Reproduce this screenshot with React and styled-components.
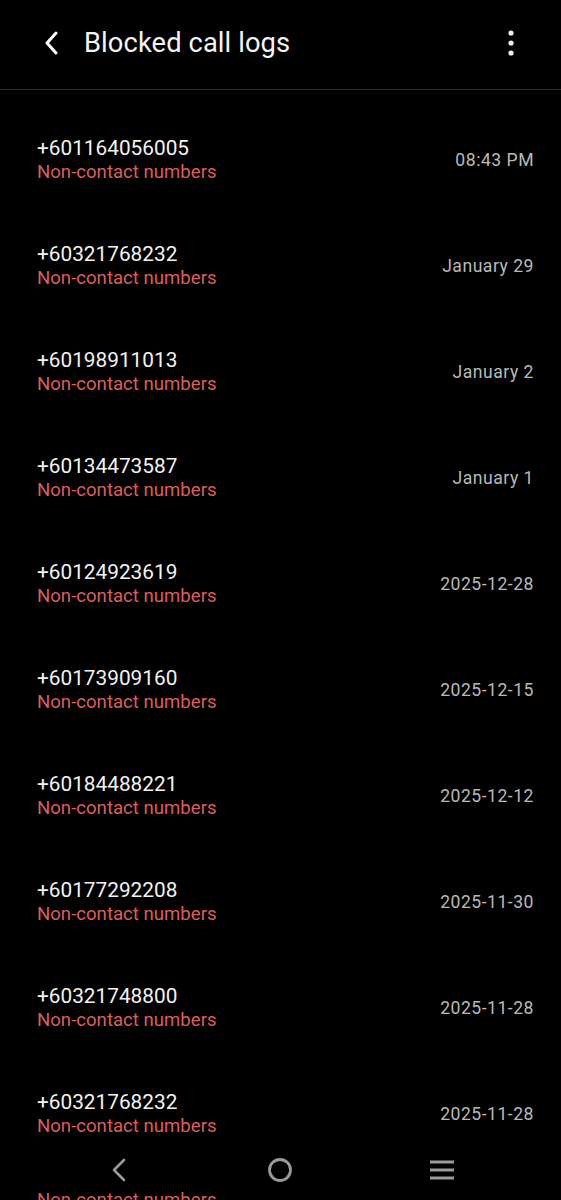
import React from 'react';
import styled, { createGlobalStyle } from 'styled-components';

const GlobalStyle = createGlobalStyle`
  html, body {
    margin: 0;
    padding: 0;
    background: #000;
  }
  body {
    font-family: Roboto, "Noto Sans", "Liberation Sans", sans-serif;
    color: #f2f2f2;
    overflow: hidden;
  }
`;

const Screen = styled.div`
  position: relative;
  width: 561px;
  height: 1200px;
  overflow: hidden;
  background: #000;
`;

const Header = styled.header`
  display: flex;
  align-items: center;
  height: 90px;
  padding: 0 40px 4px 38px;
  box-sizing: border-box;
  border-bottom: 1px solid #2b2b2b;
`;

const IconButton = styled.button`
  display: flex;
  align-items: center;
  justify-content: center;
  width: ${p => p.$size || 26}px;
  height: 40px;
  padding: 0;
  border: none;
  background: none;
  cursor: pointer;
`;

const Title = styled.h1`
  flex: 1;
  margin: 0 0 0 20px;
  font-size: 27.3px;
  font-weight: 400;
  letter-spacing: 0.1px;
  color: #f4f4f4;
`;

const List = styled.ul`
  list-style: none;
  margin: 0;
  padding: 16px 0 0;
`;

const Row = styled.li`
  display: flex;
  align-items: center;
  justify-content: space-between;
  height: 106px;
  padding: 0 27px 0 37px;
  box-sizing: border-box;
`;

const Info = styled.div`
  display: flex;
  flex-direction: column;
`;

const Number = styled.span`
  font-size: 20.8px;
  line-height: 26px;
  color: #f3f3f3;
`;

const Label = styled.span`
  font-size: 18.6px;
  line-height: 22px;
  color: #dc5d5f;
`;

const When = styled.span`
  font-size: 17.6px;
  letter-spacing: 0.5px;
  color: #b9b9b9;
  padding-top: 1px;
`;

const Peek = styled.div`
  padding: 23px 37px 0;
`;

const NavBar = styled.nav`
  position: absolute;
  left: 0;
  right: 0;
  bottom: 18px;
  display: flex;
  justify-content: space-around;
  align-items: center;
  height: 24px;
  padding: 0 38px;
`;

const NavItem = styled.div`
  display: flex;
  align-items: center;
  justify-content: center;
  width: 40px;
  height: 24px;
`;

const logs = [
  ['+601164056005', '08:43 PM'],
  ['+60321768232', 'January 29'],
  ['+60198911013', 'January 2'],
  ['+60134473587', 'January 1'],
  ['+60124923619', '2025-12-28'],
  ['+60173909160', '2025-12-15'],
  ['+60184488221', '2025-12-12'],
  ['+60177292208', '2025-11-30'],
  ['+60321748800', '2025-11-28'],
  ['+60321768232', '2025-11-28'],
];

function App() {
  return (
    <Screen>
      <GlobalStyle />
      <Header>
        <IconButton aria-label="Back">
          <svg width="16" height="24" viewBox="0 0 16 24">
            <path d="M13 2 L4 12 L13 22" fill="none" stroke="#fff" strokeWidth="3" strokeLinecap="round" strokeLinejoin="round" />
          </svg>
        </IconButton>
        <Title>Blocked call logs</Title>
        <IconButton aria-label="More" $size={20}>
          <svg width="8" height="28" viewBox="0 0 8 28">
            <circle cx="4" cy="4" r="2.6" fill="#f0f0f0" />
            <circle cx="4" cy="14" r="2.6" fill="#f0f0f0" />
            <circle cx="4" cy="24" r="2.6" fill="#f0f0f0" />
          </svg>
        </IconButton>
      </Header>

      <List>
        {logs.map(([num, when], i) => (
          <Row key={i}>
            <Info>
              <Number>{num}</Number>
              <Label>Non-contact numbers</Label>
            </Info>
            <When>{when}</When>
          </Row>
        ))}
      </List>
      <Peek>
        <Label>Non-contact numbers</Label>
      </Peek>

      <NavBar>
        <NavItem>
          <svg width="14" height="24" viewBox="0 0 14 24">
            <path d="M12 2 L2 12 L12 22" fill="none" stroke="#9a9a9a" strokeWidth="2.6" strokeLinecap="round" strokeLinejoin="round" />
          </svg>
        </NavItem>
        <NavItem>
          <svg width="26" height="26" viewBox="0 0 26 26">
            <circle cx="13" cy="13" r="10.5" fill="none" stroke="#9a9a9a" strokeWidth="2.8" />
          </svg>
        </NavItem>
        <NavItem>
          <svg width="26" height="22" viewBox="0 0 26 22">
            <path d="M1 3 H25 M1 11 H25 M1 19 H25" stroke="#9a9a9a" strokeWidth="2.8" />
          </svg>
        </NavItem>
      </NavBar>
    </Screen>
  );
}

export default App;
